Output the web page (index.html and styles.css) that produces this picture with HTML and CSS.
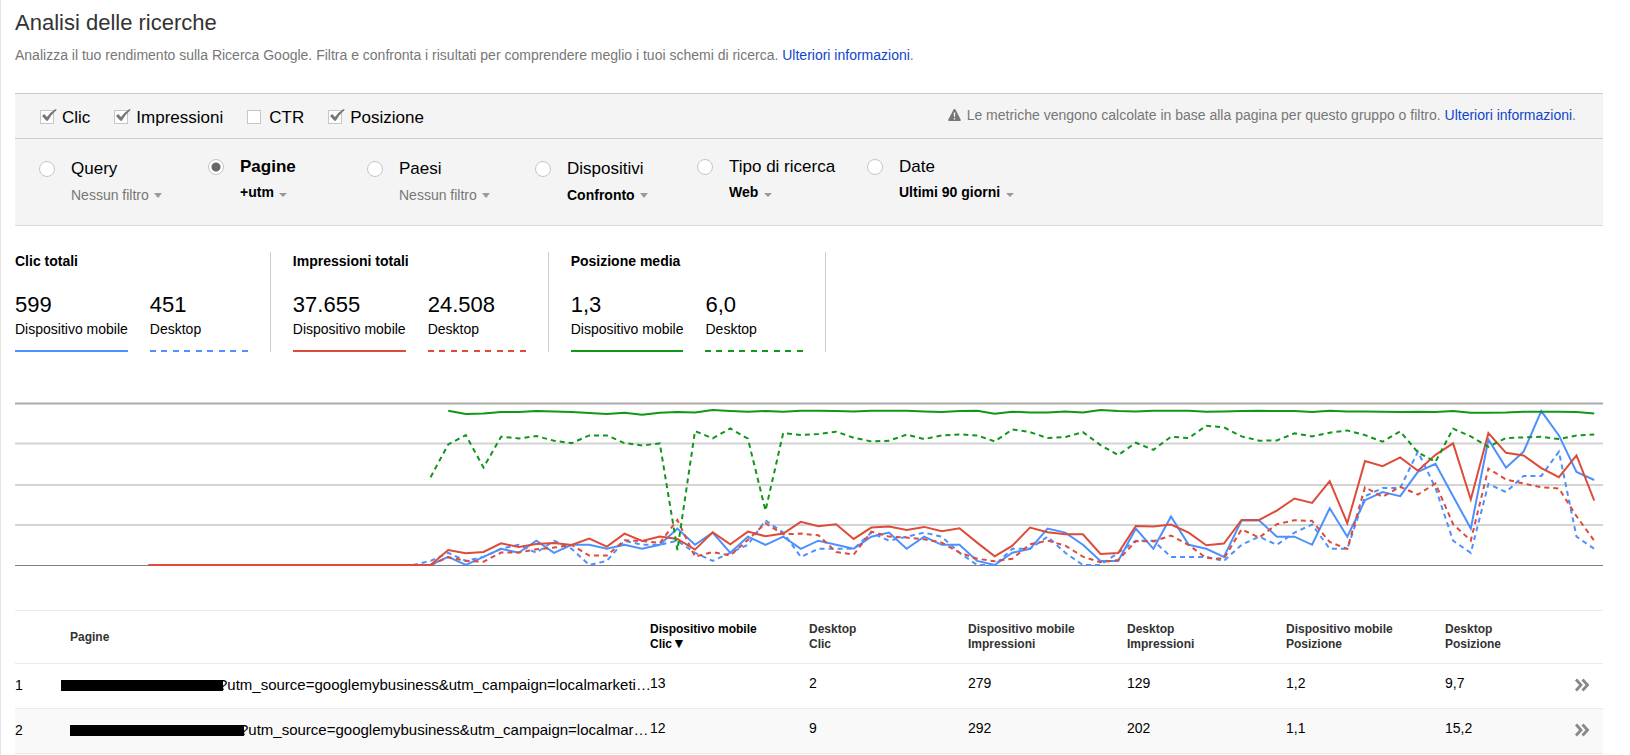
FILE: index.html
```html
<!DOCTYPE html>
<html lang="it">
  <head>
    <meta charset="utf-8">
    <title>Analisi delle ricerche</title>
    <meta name="viewport" content="width=device-width, initial-scale=1">

    <link rel="stylesheet" href="styles.css">
  </head>
  <body>
    <!-- Shapes used more than once -->
    <svg class="symbols" aria-hidden="true">
      <symbol id="tick" viewBox="0 0 16 14">
        <path d="M1 7 L3.2 5 L6 8 Q9.500 3.200 14.500 0 L15.800 .8 Q10.800 5 6.800 11.800 L5.400 11.800 Z" fill="#777"/>
      </symbol>
      <symbol id="chevrons" viewBox="0 0 16 14">
        <path d="M2 1.500 L7 7 L2 12.500 M8.500 1.500 L13.500 7 L8.500 12.500" fill="none" stroke="#888" stroke-width="2.800"/>
      </symbol>
    </svg>

    <header>
      <h1>Analisi delle ricerche</h1>
      <p class="intro">Analizza il tuo rendimento sulla Ricerca Google. Filtra e confronta i risultati per comprendere meglio i tuoi schemi di ricerca. <a href="#">Ulteriori informazioni</a>.</p>
    </header>

    <form class="panel">
      <div class="metrics">
        <label class="metric">
          <span class="box"><input type="checkbox" checked><svg><use href="#tick"/></svg></span>
          Clic
        </label>
        <label class="metric">
          <span class="box"><input type="checkbox" checked><svg><use href="#tick"/></svg></span>
          Impressioni
        </label>
        <label class="metric">
          <span class="box"><input type="checkbox"><svg><use href="#tick"/></svg></span>
          CTR
        </label>
        <label class="metric">
          <span class="box"><input type="checkbox" checked><svg><use href="#tick"/></svg></span>
          Posizione
        </label>
        <p class="note">
          <svg class="warning" viewBox="0 0 13 12" aria-hidden="true">
            <path d="M6.500 0 Q7.200 0 7.600 .8 L12.800 10.800 Q13 12 12 12 L1 12 Q0 12 .2 10.800 L5.400 .8 Q5.800 0 6.500 0 Z" fill="#777"/>
            <path d="M5.700 3.500 H7.300 L7 8 H6 Z M5.800 9 H7.200 V10.400 H5.800 Z" fill="#f4f4f4"/>
          </svg>
          <span>Le metriche vengono calcolate in base alla pagina per questo gruppo o filtro. <a href="#">Ulteriori informazioni</a>.</span>
        </p>
      </div>

      <div class="dimensions">
        <div class="dimension">
          <input type="radio" name="dimension" id="query">
          <label for="query">Query</label>
          <span class="filter"><select aria-label="Filtro query"><option>Nessun filtro</option></select></span>
        </div>
        <div class="dimension compact selected">
          <input type="radio" name="dimension" id="pages" checked>
          <label for="pages">Pagine</label>
          <span class="filter active"><select aria-label="Filtro pagine"><option>+utm</option></select></span>
        </div>
        <div class="dimension">
          <input type="radio" name="dimension" id="countries">
          <label for="countries">Paesi</label>
          <span class="filter"><select aria-label="Filtro paesi"><option>Nessun filtro</option></select></span>
        </div>
        <div class="dimension">
          <input type="radio" name="dimension" id="devices">
          <label for="devices">Dispositivi</label>
          <span class="filter active"><select aria-label="Filtro dispositivi"><option>Confronto</option></select></span>
        </div>
        <div class="dimension compact">
          <input type="radio" name="dimension" id="type">
          <label for="type">Tipo di ricerca</label>
          <span class="filter active"><select aria-label="Filtro tipo di ricerca"><option>Web</option></select></span>
        </div>
        <div class="dimension compact">
          <input type="radio" name="dimension" id="dates">
          <label for="dates">Date</label>
          <span class="filter active"><select aria-label="Filtro date"><option>Ultimi 90 giorni</option></select></span>
        </div>
      </div>
    </form>

    <section class="totals">
      <div class="total clicks">
        <h2>Clic totali</h2>
        <div class="values">
          <div class="value"><strong>599</strong>Dispositivo mobile</div>
          <div class="value desktop"><strong>451</strong>Desktop</div>
        </div>
      </div>
      <div class="total impressions">
        <h2>Impressioni totali</h2>
        <div class="values">
          <div class="value"><strong>37.655</strong>Dispositivo mobile</div>
          <div class="value desktop"><strong>24.508</strong>Desktop</div>
        </div>
      </div>
      <div class="total position">
        <h2>Posizione media</h2>
        <div class="values">
          <div class="value"><strong>1,3</strong>Dispositivo mobile</div>
          <div class="value desktop"><strong>6,0</strong>Desktop</div>
        </div>
      </div>
    </section>

    <svg id="chart" class="chart" viewBox="0 0 1588 180" preserveAspectRatio="none" role="img" aria-label="Andamento">
      <g class="grid">
        <path class="top" d="M0 8.500 H1588"/>
        <path d="M0 48.500 H1588"/>
        <path d="M0 90 H1588"/>
        <path d="M0 130 H1588"/>
        <path class="base" d="M0 170.500 H1588"/>
      </g>
    </svg>

    <table>
      <colgroup>
        <col class="col-index">
        <col>
        <col class="col-data" span="5">
        <col class="col-last">
        <col class="col-more">
      </colgroup>
      <thead>
        <tr>
          <th></th>
          <th>Pagine</th>
          <th class="sorted">Dispositivo mobile<br>Clic<span class="sort">▼</span></th>
          <th>Desktop<br>Clic</th>
          <th>Dispositivo mobile<br>Impressioni</th>
          <th>Desktop<br>Impressioni</th>
          <th>Dispositivo mobile<br>Posizione</th>
          <th>Desktop<br>Posizione</th>
          <th></th>
        </tr>
      </thead>
      <tbody>
        <tr>
          <td>1</td>
          <td class="url"><span class="redacted wide"></span>?utm_source=googlemybusiness&amp;utm_campaign=localmarketi…</td>
          <td class="number">13</td>
          <td class="number">2</td>
          <td class="number">279</td>
          <td class="number">129</td>
          <td class="number">1,2</td>
          <td class="number">9,7</td>
          <td><a href="#" aria-label="Dettagli"><svg class="more"><use href="#chevrons"/></svg></a></td>
        </tr>
        <tr>
          <td>2</td>
          <td class="url"><span class="redacted"></span>?utm_source=googlemybusiness&amp;utm_campaign=localmar…</td>
          <td class="number">12</td>
          <td class="number">9</td>
          <td class="number">292</td>
          <td class="number">202</td>
          <td class="number">1,1</td>
          <td class="number">15,2</td>
          <td><a href="#" aria-label="Dettagli"><svg class="more"><use href="#chevrons"/></svg></a></td>
        </tr>
      </tbody>
    </table>

    <script src="chart.js"></script>
  </body>
</html>
```

FILE: styles.css
```css
body {
  margin: 0;
  min-height: 100vh;
  box-sizing: border-box;
  padding: 10px 27px 0 14px;
  border-left: 1px solid #e5e5e5;
  background-color: #fff;
  color: #000;
  font: 14px/18px "Liberation Sans", Arial, sans-serif;
}
a {
  color: #14c;
  text-decoration: none;
}
h1 {
  margin: 0 0 10px;
  color: #333;
  font-size: 22px;
  font-weight: normal;
  line-height: 26px;
}
.symbols {
  display: none;
}
.intro {
  margin: 0 0 29px;
  color: #777;
}

/* Metrics and dimensions */
.panel {
  border-top: 1px solid #ccc;
  border-bottom: 1px solid #d9d9d9;
  background-color: #f4f4f4;
}
.metrics {
  display: flex;
  gap: 24px;
  padding: 13px 27px 9px 25px;
  border-bottom: 1px solid #ccc;
}
.metric {
  display: flex;
  align-items: flex-start;
  gap: 8px;
  font-size: 17px;
  line-height: 22px;
}
.box {
  position: relative;
  width: 14px;
  height: 14px;
  margin-top: 3px;
}
.box input {
  display: block;
  appearance: none;
  width: 14px;
  height: 14px;
  margin: 0;
  border: 1px solid #c6c6c6;
  background-color: #fff;
}
.box svg {
  display: none;
  position: absolute;
  left: 1px;
  top: -1px;
  width: 16px;
  height: 14px;
}
.box input:checked + svg {
  display: block;
}
.note {
  display: flex;
  gap: 6px;
  margin: 0 0 0 auto;
  color: #777;
  line-height: 16px;
}
.warning {
  width: 13px;
  height: 12px;
  margin-top: 2px;
}
.dimensions {
  display: grid;
  grid-template-columns: 169px 159px 168px 162px 170px auto;
  padding: 17px 24px 21px;
}
.dimension {
  display: grid;
  grid-template-columns: 16px auto;
  grid-template-rows: 22px 18px;
  gap: 6px 16px;
  justify-content: start;
  padding-top: 2px;
}
.compact {
  row-gap: 5px;
  padding-top: 0;
}
.dimension input {
  appearance: none;
  width: 16px;
  height: 16px;
  margin: 3px 0 0;
  border: 1px solid #c6c6c6;
  border-radius: 50%;
  background-color: #fff;
}
.dimension input:checked {
  background-image: radial-gradient(circle, #666 3px, #666 4px, #fff 5px);
}
.dimension label {
  font-size: 17px;
  line-height: 22px;
}
.selected label {
  font-weight: bold;
}
.filter {
  position: relative;
  grid-column: 2;
  justify-self: start;
}
.filter select {
  display: block;
  appearance: none;
  height: 18px;
  margin: 0;
  padding: 0 13px 0 0;
  border: 0;
  background: none;
  color: #777;
  font: inherit;
}
.filter::after {
  content: "";
  position: absolute;
  right: 0;
  top: 7px;
  border: 4px solid transparent;
  border-top: 5px solid #999;
  border-bottom: 0;
  pointer-events: none;
}
.active select {
  color: #000;
  font-weight: bold;
}
.compact .filter::after {
  top: 10px;
  border-top-width: 4px;
}

/* Totals */
.totals {
  display: flex;
  gap: 22px;
  margin-top: 26px;
}
.total {
  padding-right: 22px;
  border-right: 1px solid #ccc;
}
.total h2 {
  margin: 0 0 22px;
  font-size: 14px;
  line-height: 18px;
}
.values {
  display: flex;
  gap: 22px;
}
.value {
  padding-bottom: 14px;
  background: linear-gradient(var(--line), var(--line)) bottom / 100% 2px no-repeat;
}
.value strong {
  display: block;
  margin-bottom: 2px;
  font-size: 22px;
  font-weight: normal;
  line-height: 26px;
}
/* nine dashes, the first and last flush with the edges */
.desktop {
  width: 98px;
  background-image: repeating-linear-gradient(90deg, var(--line) 0 6px, transparent 6px calc((100% + 5px) / 9));
}
.clicks {
  --line: #4d90fe;
}
.impressions {
  --line: #dd4b39;
}
.position {
  --line: #109618;
}

/* Chart */
.chart {
  display: block;
  width: 100%;
  height: 180px;
  margin: 43px 0 35px;
}
.chart path,
.chart polyline {
  fill: none;
  stroke-width: 2px;
  vector-effect: non-scaling-stroke;
}
.grid path {
  stroke: #d4d4d4;
}
.grid .top {
  stroke: #aaa;
}
.grid .base {
  stroke: #808080;
  stroke-width: 1px;
}
.line-clicks {
  stroke: #4d90fe;
}
.line-impressions {
  stroke: #dd4b39;
}
.line-position {
  stroke: #109618;
}
.chart .dashed {
  stroke-dasharray: 5 4;
}

/* Table */
table {
  width: 100%;
  table-layout: fixed;
  border-spacing: 0;
}
.col-index {
  width: 55px;
}
.col-data {
  width: 159px;
}
.col-last {
  width: 129px;
}
.col-more {
  width: 29px;
}
th {
  height: 52px;
  padding: 0;
  border-top: 1px solid #ebebeb;
  border-bottom: 1px solid #ebebeb;
  color: #333;
  font-size: 12px;
  line-height: 15px;
  text-align: left;
}
.sorted {
  color: #000;
}
.sort {
  font-size: 14px;
  line-height: 1px;
}
td {
  height: 42px;
  padding: 0 0 2px;
  border-bottom: 1px solid #ebebeb;
}
tbody tr:nth-child(even) td {
  background-color: #f9f9f9;
}
.url {
  font-size: 15px;
  white-space: nowrap;
}
.number {
  height: 38px;
  padding-bottom: 6px;
}
.redacted {
  display: inline-block;
  width: 174px;
  height: 11px;
  margin-right: -4px;
  background-color: #000;
  vertical-align: -1px;
}
.wide {
  width: 162px;
  margin-left: -9px;
}
.more {
  display: block;
  width: 16px;
  height: 14px;
}
```

FILE: chart.js
```js
// Each series holds one value per day, 'start' is the first day with data.
const series = [
  {
    name: "clicks", start: 0, max: 40,
    values: [0, 0, 0, 0, 0, 0, 0, 0, 0, 0, 0, 0, 0, 0, 0, 0,
      0, 2, 0, 2, 4, 3, 6, 3, 5, 5, 4, 5, 4, 5, 9, 5, 8, 3, 7, 5, 7, 4, 6, 5, 4, 7, 8, 4, 7, 5, 5, 1, 0, 3, 4,
      9, 8, 5, 1, 1, 9, 4, 12, 5, 4, 2, 11, 11, 7, 7, 5, 14, 7, 16, 18, 17, 23, 25, 17, 9, 31, 24, 28, 38, 32, 23, 21]
  },
  {
    name: "clicks", start: 15, max: 40, dashed: true,
    values: [0, 1, 3, 1, 2, 4, 5, 3, 6, 4, 0, 1, 6, 5, 5, 6, 3, 1, 3, 5, 11, 8, 2, 4, 4, 4, 8, 6, 7, 8, 7, 3, 0, 0, 4, 4,
      7, 3, 0, 0, 3, 6, 6, 2, 2, 2, 1, 5, 7, 5, 8, 10, 4, 4, 17, 19, 19, 28, 19, 6, 3, 20, 18, 22, 22, 28, 7, 4]
  },
  {
    name: "impressions", start: 0, max: 485,
    values: [0, 0, 0, 0, 0, 0, 0, 0, 0, 0, 0, 0, 0, 0, 0, 0,
      0, 45, 35, 39, 65, 54, 63, 66, 60, 79, 55, 94, 72, 85, 78, 46, 98, 62, 100, 86, 94, 129, 116, 122, 78, 112, 115,
      105, 114, 101, 110, 67, 26, 58, 112, 98, 92, 92, 33, 36, 117, 115, 121, 97, 59, 64, 135, 135, 163, 199, 186, 251,
      125, 311, 296, 322, 282, 330, 364, 196, 395, 336, 328, 290, 263, 328, 193]
  },
  {
    name: "impressions", start: 16, max: 485, dashed: true,
    values: [0, 23, 13, 10, 37, 37, 47, 52, 60, 28, 28, 74, 72, 66, 135, 25, 39, 28, 75, 125, 92, 94, 89, 39, 31, 100, 85,
      82, 77, 67, 37, 19, 11, 19, 62, 73, 58, 25, 8, 15, 71, 71, 88, 60, 21, 19, 107, 82, 122, 134, 132, 69, 48, 233,
      204, 234, 211, 244, 122, 73, 289, 256, 244, 233, 229, 146, 73]
  },
  {
    name: "position", start: 17, max: 485,
    values: [462, 452, 454, 458, 458, 461, 460, 458, 455, 452, 456, 450, 456, 458, 457, 464, 461, 459, 461, 459, 462, 462,
      461, 460, 462, 462, 462, 460, 458, 461, 462, 453, 459, 457, 457, 460, 457, 464, 461, 460, 462, 462, 462, 459, 460,
      461, 462, 461, 461, 458, 462, 460, 460, 459, 458, 459, 458, 461, 456, 456, 457, 459, 459, 459, 458, 454]
  },
  {
    name: "position", start: 16, max: 485, dashed: true,
    values: [263, 361, 389, 292, 384, 379, 386, 372, 365, 388, 388, 365, 358, 364, 45, 401, 379, 409, 378, 163, 395, 389,
      392, 399, 381, 370, 372, 390, 377, 388, 391, 388, 370, 406, 398, 380, 383, 398, 359, 329, 366, 345, 384, 380, 417,
      412, 385, 372, 373, 394, 385, 396, 403, 389, 369, 400, 337, 309, 408, 385, 354, 380, 382, 384, 377, 388, 391]
  }
];

const firstDay = 133.5;
const dayWidth = 17.63;
const baseline = 170;
const plotHeight = 162;

const chart = document.getElementById("chart");

series.forEach(item => {
  const points = item.values.map((value, i) => {
    const x = firstDay + (item.start + i) * dayWidth;
    const y = baseline - value / item.max * plotHeight;
    return x.toFixed(1) + "," + y.toFixed(1);
  });

  const line = document.createElementNS("http://www.w3.org/2000/svg", "polyline");
  line.setAttribute("class", "line-" + item.name + (item.dashed ? " dashed" : ""));
  line.setAttribute("points", points.join(" "));
  chart.appendChild(line);
});
```
